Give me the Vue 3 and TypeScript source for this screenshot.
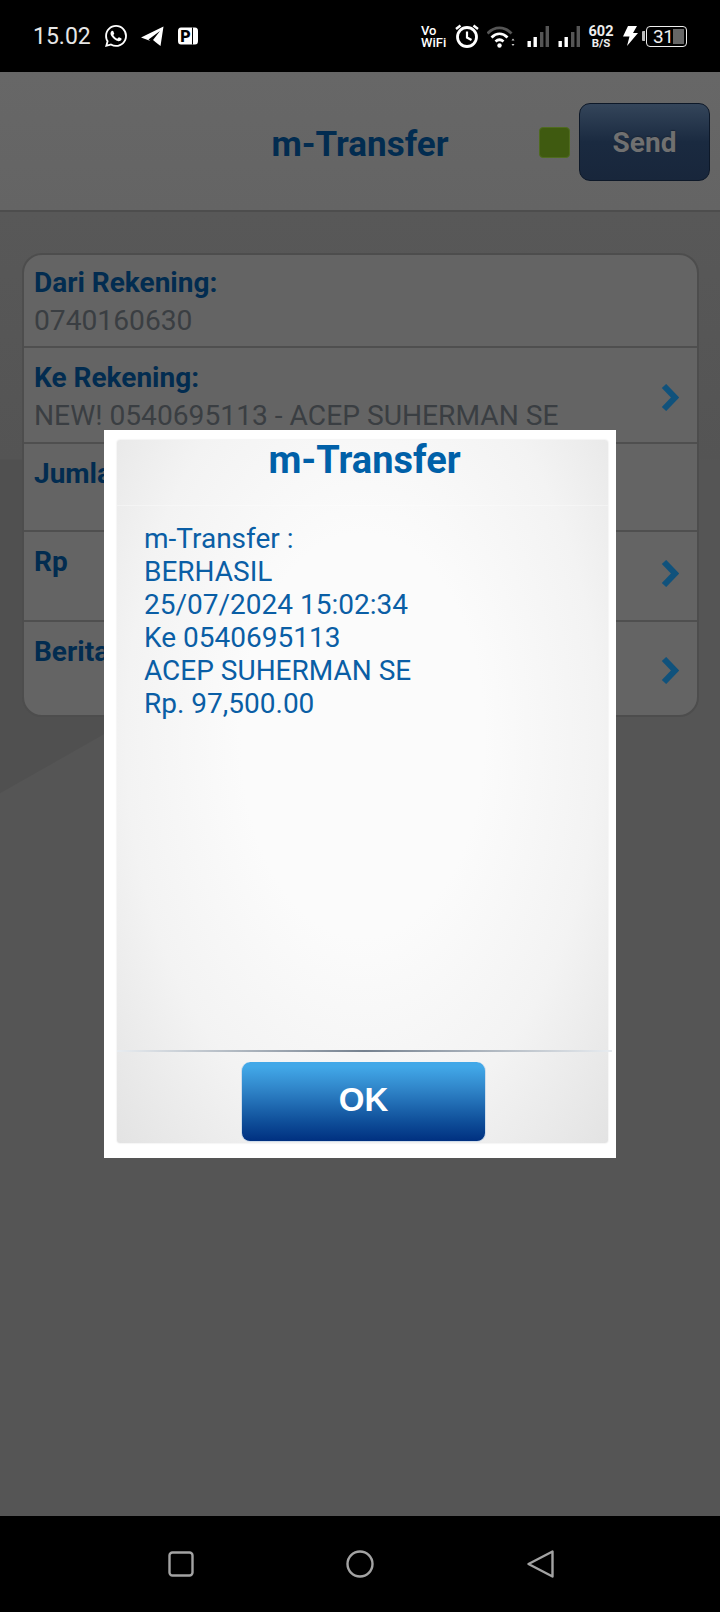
<template>
  <div class="screen">
    <!-- status bar -->
    <div class="status">
      <span class="time">15.02</span>
      <svg class="ic-wa" viewBox="0 0 24 24" fill="#fff">
        <path d="M17.472 14.382c-.297-.149-1.758-.867-2.03-.967-.273-.099-.471-.148-.67.15-.197.297-.767.966-.94 1.164-.173.199-.347.223-.644.075-.297-.15-1.255-.463-2.39-1.475-.883-.788-1.48-1.761-1.653-2.059-.173-.297-.018-.458.13-.606.134-.133.298-.347.446-.52.149-.174.198-.298.298-.497.099-.198.05-.371-.025-.52-.075-.149-.669-1.612-.916-2.207-.242-.579-.487-.5-.669-.51-.173-.008-.371-.01-.57-.01-.198 0-.52.074-.792.372-.272.297-1.04 1.016-1.04 2.479 0 1.462 1.065 2.875 1.213 3.074.149.198 2.096 3.2 5.077 4.487.709.306 1.262.489 1.694.625.712.227 1.36.195 1.871.118.571-.085 1.758-.719 2.006-1.413.248-.694.248-1.289.173-1.413-.074-.124-.272-.198-.57-.347m-5.421 7.403h-.004a9.87 9.87 0 01-5.031-1.378l-.361-.214-3.741.982.998-3.648-.235-.374a9.86 9.86 0 01-1.51-5.26c.001-5.45 4.436-9.884 9.888-9.884 2.64 0 5.122 1.03 6.988 2.898a9.825 9.825 0 012.893 6.994c-.003 5.45-4.437 9.884-9.885 9.884m8.413-18.297A11.815 11.815 0 0012.05 0C5.495 0 .16 5.335.157 11.892c0 2.096.547 4.142 1.588 5.945L.057 24l6.305-1.654a11.882 11.882 0 005.683 1.448h.005c6.554 0 11.89-5.335 11.893-11.893a11.821 11.821 0 00-3.48-8.413z" />
      </svg>
      <svg class="ic-tg" viewBox="0 0 23 20" fill="#fff">
        <path d="M0 11.5 22.5 0.5 19.5 20 15 16.5 12 14 19 5 7.5 13.5 9.5 15Z" />
      </svg>
      <svg class="ic-p" viewBox="0 0 20 18">
        <path d="M3 0.5H17Q20 0.5 20 4V14Q20 17.5 17 17.5H3Q0 17.5 0 14V4Q0 0.5 3 0.5Z" fill="#fff" />
        <rect x="14" y="0.5" width="1" height="17" fill="#000" />
        <text x="7.5" y="14.5" text-anchor="middle" class="p-letter">P</text>
      </svg>

      <div class="status-right">
        <span class="vowifi"><span>Vo</span><span>WiFi</span></span>
        <svg class="ic-alarm" viewBox="0 0 24 24" fill="none" stroke="#fff">
          <circle cx="12" cy="13" r="9.5" stroke-width="2.8" />
          <path d="M12 7.5V13.5L16.5 16" stroke-width="2.2" />
          <path d="M1 5 5.5 1.5M23 5 18.5 1.5" stroke-width="2.4" />
        </svg>
        <svg class="ic-wifi" viewBox="0 0 28 23" fill="none" stroke="#fff">
          <path d="M0.5 8.5C7.5 1 17.5 1 24.5 8.5" stroke="#555" stroke-width="2.8" />
          <path d="M4.5 12.5C9.5 7.6 15.5 7.6 20.5 12.5" stroke-width="2.8" />
          <path d="M8.5 16.5C11 14.2 14 14.2 16.5 16.5" stroke-width="2.8" />
          <circle cx="12.5" cy="20.5" r="2.2" fill="#fff" stroke="none" />
          <path d="M24.5 15.5 26 13.5 27.5 15.5ZM24.5 19 26 21 27.5 19Z" fill="#ccc" stroke="none" />
        </svg>
        <svg v-for="n in 2" :key="n" class="ic-signal" viewBox="0 0 22 21">
          <rect x="0.5" y="15" width="3.4" height="6" fill="#fff" />
          <rect x="6.5" y="11" width="3.4" height="10" fill="#fff" />
          <rect x="13" y="6" width="3.4" height="15" fill="#555" />
          <rect x="18.6" y="0" width="3.4" height="21" fill="#555" />
        </svg>
        <span class="speed"><b>602</b><i>B/S</i></span>
        <svg class="ic-bolt" viewBox="0 0 15 20" fill="#fff">
          <path d="M5 0H14L10 7H15L4 20 6.5 10.5H0Z" />
        </svg>
        <span class="nub"></span>
        <span class="battery"><span class="level">31</span><span class="fill"></span></span>
      </div>
    </div>

    <!-- header -->
    <header class="header">
      <span></span>
      <h1 class="title">m-Transfer</h1>
      <div class="actions">
        <span class="led"></span>
        <button class="send">Send</button>
      </div>
    </header>

    <!-- form behind the dialog -->
    <main class="body">
      <div class="card">
        <div
          v-for="row in rows"
          :key="row.label"
          class="row"
          :style="{ height: row.height + 'px' }"
        >
          <div class="row-text">
            <div class="row-label">{{ row.label }}</div>
            <div class="row-value">{{ row.value }}&nbsp;</div>
          </div>
          <svg v-if="row.arrow" class="chevron" :class="{ raised: row.raised }" viewBox="0 0 18 27" fill="none">
            <path d="M3 2 14 13.5 3 25" stroke="#10527c" stroke-width="6" />
          </svg>
        </div>
      </div>
    </main>

    <!-- nav bar -->
    <nav class="nav">
      <svg class="nav-square" viewBox="0 0 26 26" fill="none" stroke="#a3a3a3" stroke-width="2.4">
        <rect x="1.5" y="1.5" width="23" height="23" rx="3" />
      </svg>
      <svg class="nav-circle" viewBox="0 0 28 28" fill="none" stroke="#a3a3a3" stroke-width="2.4">
        <circle cx="14" cy="14" r="12.5" />
      </svg>
      <svg class="nav-back" viewBox="0 0 27 28" fill="none" stroke="#a3a3a3" stroke-width="2.4" stroke-linejoin="round">
        <path d="M1.5 14 25.5 1.5V26.5Z" />
      </svg>
    </nav>

    <!-- dialog -->
    <div class="dialog">
      <div class="panel">
        <div class="panel-title">m-Transfer</div>
        <div class="message">
          <div v-for="line in lines" :key="line">{{ line }}</div>
        </div>
        <div class="rule"></div>
        <div class="panel-foot">
          <button class="ok">OK</button>
        </div>
      </div>
    </div>
  </div>
</template>

<script setup lang="ts">
interface Row {
  label: string
  value: string
  height: number
  arrow?: boolean
  raised?: boolean
}

const rows: Row[] = [
  { label: 'Dari Rekening:', value: '0740160630', height: 93 },
  { label: 'Ke Rekening:', value: 'NEW! 0540695113 - ACEP SUHERMAN SE', height: 96, arrow: true },
  { label: 'Jumlah', value: '', height: 88 },
  { label: 'Rp', value: '', height: 90, arrow: true, raised: true },
  { label: 'Berita', value: '', height: 93, arrow: true }
]

const lines = [
  'm-Transfer :',
  'BERHASIL',
  '25/07/2024 15:02:34',
  'Ke 0540695113',
  'ACEP SUHERMAN SE',
  'Rp. 97,500.00'
]
</script>

<style>
html,
body {
  margin: 0;
  background: #000;
}
</style>

<style scoped>
.screen {
  position: relative;
  display: flex;
  flex-direction: column;
  width: 720px;
  height: 1612px;
  overflow: hidden;
  font-family: Roboto, "Liberation Sans", sans-serif;
}

/* status bar */
.status {
  display: flex;
  align-items: center;
  flex: none;
  height: 72px;
  padding: 0 33px;
  box-sizing: border-box;
  background: #000;
  color: #fff;
}

.status svg {
  flex: none;
  display: block;
}

.time {
  width: 57px;
  font-size: 23px;
  line-height: 1;
  color: #e6e6e6;
  white-space: nowrap;
}

.ic-wa {
  width: 22px;
  height: 22px;
  margin-left: 15px;
}

.ic-tg {
  width: 23px;
  height: 20px;
  margin-left: 14px;
}

.ic-p {
  width: 20px;
  height: 18px;
  margin-left: 14px;
}

.p-letter {
  font-family: Roboto, sans-serif;
  font-size: 16px;
  font-weight: 900;
  fill: #000;
}

.status-right {
  display: flex;
  align-items: center;
  margin-left: auto;
}

.vowifi {
  display: flex;
  flex-direction: column;
  gap: 1px;
  width: 26px;
  font-size: 13px;
  line-height: 11px;
  font-weight: 500;
  white-space: nowrap;
}

.ic-alarm {
  width: 24px;
  height: 24px;
  margin-left: 8px;
}

.ic-wifi {
  width: 28px;
  height: 23px;
  margin-left: 8px;
}

.ic-signal {
  width: 22px;
  height: 21px;
  margin-left: 9px;
}

.ic-wifi + .ic-signal {
  margin-left: 12px;
}

.speed {
  display: flex;
  flex-direction: column;
  align-items: center;
  width: 24px;
  margin-left: 9px;
  color: #eee;
}

.speed b {
  font-size: 14.5px;
  line-height: 13px;
}

.speed i {
  font-size: 11.5px;
  line-height: 10px;
  font-style: normal;
  font-weight: 700;
}

.ic-bolt {
  width: 15px;
  height: 20px;
  margin-left: 10px;
}

.nub {
  width: 3px;
  height: 10px;
  margin-left: 4px;
  background: #bbb;
  border-radius: 1px 0 0 1px;
}

.battery {
  display: flex;
  align-items: center;
  width: 41px;
  height: 21px;
  margin-left: 1px;
  padding: 2px 1px 2px 6px;
  box-sizing: border-box;
  border: 1.5px solid #eee;
  border-radius: 4px;
}

.level {
  flex: none;
  width: 20px;
  font-size: 19px;
  line-height: 1;
  letter-spacing: -0.5px;
  color: #eee;
}

.fill {
  flex: none;
  align-self: stretch;
  width: 11px;
  background: #666;
}

/* header */
.header {
  display: grid;
  grid-template-columns: 1fr auto 1fr;
  align-items: center;
  flex: none;
  height: 140px;
  padding: 0 10px;
  box-sizing: border-box;
  background: linear-gradient(180deg, #676767, #646464);
  border-bottom: 2px solid #4d4d4d;
}

.title {
  margin: 8px 0 0;
  font-size: 35px;
  line-height: 1.2;
  font-weight: 700;
  color: #022c50;
}

.actions {
  display: flex;
  align-items: center;
  justify-content: flex-end;
  gap: 9px;
  margin-top: 2px;
}

.led {
  width: 31px;
  height: 31px;
  box-sizing: border-box;
  background: #3f5a10;
  border: 1px solid #4f6b1f;
  border-radius: 4px;
}

.send {
  width: 131px;
  height: 78px;
  padding: 0;
  background: linear-gradient(180deg, #34455a, #1a2a40 50%, #18263b);
  border: 1px solid #0d1828;
  border-radius: 11px;
  font-family: inherit;
  font-size: 28px;
  font-weight: 700;
  color: #707070;
  text-shadow: 0 -1px 1px #1a2636;
}

/* form */
.body {
  flex: 1;
  padding: 41px 21px 0 22px;
  background:
    linear-gradient(180deg, #585858 0, #545454 247px, transparent 248px),
    linear-gradient(150.4deg, #505050 505px, #555 506px);
}

.card {
  background: #646464;
  border: 2px solid #4d4d4d;
  border-radius: 20px;
}

.row {
  display: flex;
  align-items: center;
  justify-content: space-between;
  padding: 0 18px 0 10px;
  box-sizing: border-box;
  border-bottom: 2px solid #4f4f4f;
}

.row:last-child {
  border-bottom: 0;
}

.row-text {
  align-self: flex-start;
  padding-top: 11px;
  font-size: 28px;
  line-height: 38px;
  white-space: nowrap;
}

.row:first-child .row-text {
  padding-top: 9px;
}

.row-label {
  font-weight: 700;
  color: #022c50;
}

.row-value {
  font-size: 28.2px;
  color: #3a3e42;
}

.chevron {
  width: 18px;
  height: 27px;
  flex: none;
  margin-top: 4px;
}

.chevron.raised {
  margin-top: 0;
  margin-bottom: 6px;
}

/* nav bar */
.nav {
  display: flex;
  align-items: center;
  flex: none;
  height: 96px;
  padding: 0 0 0 168px;
  box-sizing: border-box;
  background: #000;
}

.nav-square {
  width: 26px;
  height: 26px;
}

.nav-circle {
  width: 28px;
  height: 28px;
  margin-left: 152px;
}

.nav-back {
  width: 27px;
  height: 28px;
  margin-left: 153px;
}

/* dialog */
.dialog {
  position: absolute;
  top: 430px;
  left: 104px;
  width: 512px;
  height: 728px;
  padding: 10px 8px 15px 13px;
  box-sizing: border-box;
  background: #fff;
}

.panel {
  display: flex;
  flex-direction: column;
  height: 100%;
  background: radial-gradient(ellipse farthest-corner at 50% 42%, #fbfbfb 35%, #f3f3f3 68%, #e3e3e3 100%);
  border-radius: 3px;
  box-shadow: 0 0 2px #ddd;
}

.panel-title {
  flex: none;
  height: 66px;
  padding-left: 4px;
  box-sizing: border-box;
  border-bottom: 1px solid rgba(255, 255, 255, 0.35);
  font-size: 38px;
  line-height: 40px;
  font-weight: 700;
  text-align: center;
  color: #0060a8;
}

.message {
  flex: 1;
  padding: 16px 0 0 27px;
  font-size: 28px;
  line-height: 33px;
  color: #0a5ea5;
}

.rule {
  flex: none;
  height: 2px;
  margin-right: -4px;
  background: linear-gradient(90deg, #e8ecf0, #75818f 50%, #e8ecf0);
}

.panel-foot {
  display: flex;
  justify-content: center;
  flex: none;
  height: 91px;
  padding: 10px 0 0 2px;
  box-sizing: border-box;
}

.ok {
  width: 245px;
  height: 80px;
  padding: 0 0 3px;
  background: linear-gradient(180deg, #42a8e8 6%, #2f84c8 35%, #0f4f9a 75%, #003080);
  border: 1px solid #cfdcea;
  border-width: 0 1px 1px;
  border-radius: 9px;
  font-family: "Liberation Sans", Arial, sans-serif;
  font-size: 33px;
  font-weight: 700;
  color: #fff;
}
</style>
